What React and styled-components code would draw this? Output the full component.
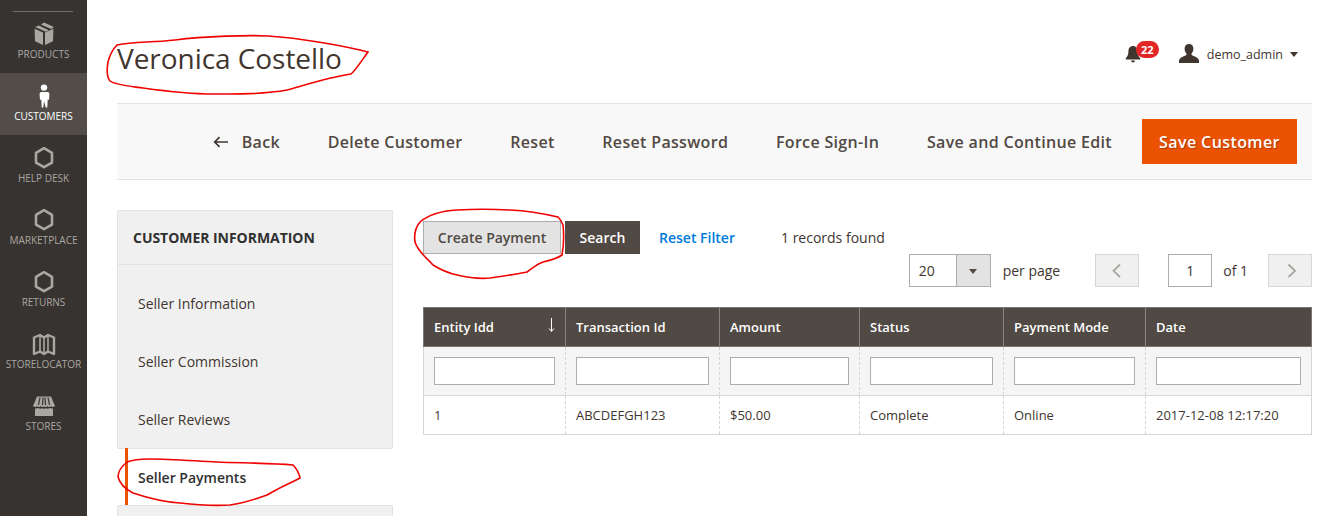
import React from "react";
import styled, { createGlobalStyle } from "styled-components";

const Global = createGlobalStyle`
  html, body { margin: 0; padding: 0; background: #fff; }
  body { font-family: "Open Sans", sans-serif; color: #41362f; overflow: hidden; }
  * { box-sizing: border-box; }
`;

const Page = styled.div`
  position: relative;
  display: flex;
  width: 1338px;
  height: 516px;
  overflow: hidden;
`;

const Rail = styled.nav`
  width: 87px;
  flex: none;
  background: #373330;
  padding-top: 11px;
`;
const RailRule = styled.div`
  width: 60px;
  height: 1px;
  margin: 0 auto -1px 13px;
  background: #736f6c;
`;
const RailItem = styled.a`
  display: flex;
  flex-direction: column;
  align-items: center;
  height: 62px;
  padding-top: 11px;
  background: ${(p) => (p.$active ? "#524d49" : "transparent")};
  color: ${(p) => (p.$active ? "#fff" : "#aaa6a0")};
  font-size: 10px;
  line-height: 14px;
  white-space: nowrap;
  svg { display: block; height: 24px; width: 24px; margin-bottom: 1px; color: ${(p) => (p.$active ? "#fff" : "#aaa6a0")}; }
`;

const Main = styled.main`
  flex: 1;
  min-width: 0;
  padding: 0 26px 0 30px;
`;
const TopRow = styled.header`
  display: flex;
  align-items: center;
  justify-content: space-between;
  height: 103px;
  padding: 14px 14px 0 0;
`;
const Title = styled.h1`
  margin: 0 0 2px;
  font-size: 28px;
  font-weight: 400;
  line-height: 36px;
  letter-spacing: -0.05px;
  color: #41362f;
`;
const Account = styled.div`
  display: flex;
  align-items: center;
  margin-bottom: 9px;
  font-size: 12.5px;
  color: #41362f;
`;
const Bell = styled.div`
  position: relative;
  width: 16px;
  height: 18px;
  margin-right: 38px;
  svg { display: block; width: 16px; height: 18px; }
`;
const Badge = styled.span`
  position: absolute;
  left: 11px;
  top: -4px;
  width: 23px;
  height: 17px;
  border-radius: 9px;
  background: #e22626;
  color: #fff;
  font-size: 11px;
  font-weight: 700;
  line-height: 17px;
  text-align: center;
`;
const UserIcon = styled.svg`
  width: 20px;
  height: 20px;
  margin-right: 8px;
`;
const Caret = styled.span`
  width: 0;
  height: 0;
  margin-left: 7px;
  border-left: 4px solid transparent;
  border-right: 4px solid transparent;
  border-top: 5px solid #41362f;
`;

const Toolbar = styled.div`
  display: flex;
  align-items: center;
  justify-content: flex-end;
  height: 77px;
  padding-right: 15px;
  background: #f8f8f8;
  border-top: 1px solid #e3e3e3;
  border-bottom: 1px solid #e3e3e3;
`;
const ToolButton = styled.a`
  display: flex;
  align-items: center;
  margin-right: 47.7px;
  font-size: 16px;
  font-weight: 600;
  letter-spacing: 0.33px;
  color: #514943;
  white-space: nowrap;
  &:nth-last-child(2) { margin-right: 30px; }
  svg { width: 16px; height: 12px; margin-right: 13px; }
`;
const SaveButton = styled.button`
  width: 155px;
  height: 45px;
  border: 0;
  background: #eb5202;
  color: #fff;
  font-family: inherit;
  font-size: 16px;
  font-weight: 600;
  letter-spacing: 0.4px;
  text-shadow: 1px 1px 1px rgba(0, 0, 0, 0.3);
`;

const Columns = styled.div`
  display: flex;
  padding-top: 30px;
`;
const Side = styled.aside`
  width: 276px;
  flex: none;
`;
const SidePanel = styled.div`
  background: #f0f0f0;
  border: 1px solid #e3e3e3;
  border-radius: 1px;
`;
const SideHead = styled.div`
  height: 54px;
  margin-bottom: 9px;
  padding-left: 15px;
  border-bottom: 1px solid #e3e3e3;
  font-size: 14px;
  font-weight: 700;
  line-height: 54px;
  letter-spacing: -0.04px;
  color: #303030;
`;
const SideItem = styled.div`
  height: 58px;
  padding-left: 20px;
  font-size: 14px;
  line-height: 60px;
  color: #41362f;
`;
const ActiveItem = styled.div`
  height: 58px;
  margin: -1px 0 -1px 8px;
  padding-left: 10px;
  border-left: 3px solid #eb5202;
  font-size: 14px;
  font-weight: 600;
  line-height: 60px;
  color: #303030;
`;
const NextPanel = styled(SidePanel)`
  height: 30px;
`;

const Content = styled.section`
  width: 889px;
  margin-left: 30px;
  padding-top: 11px;
`;
const ActionRow = styled.div`
  display: flex;
  align-items: center;
  height: 33px;
  font-size: 14px;
`;
const CreateButton = styled.button`
  width: 138px;
  height: 33px;
  padding: 0;
  border: 1px solid #adadad;
  background: #e3e3e3;
  color: #514943;
  font-family: inherit;
  font-size: 14px;
  font-weight: 600;
`;
const SearchButton = styled.button`
  width: 75px;
  height: 33px;
  margin-left: 4px;
  padding: 0;
  border: 0;
  background: #514943;
  color: #fff;
  font-family: inherit;
  font-size: 14px;
  font-weight: 600;
`;
const ResetLink = styled.a`
  margin-left: 19px;
  color: #007bdb;
  font-weight: 600;
`;
const Records = styled.span`
  margin-left: 46px;
  color: #41362f;
`;
const PagerRow = styled.div`
  display: flex;
  align-items: center;
  justify-content: flex-end;
  height: 33px;
  font-size: 14px;
  color: #41362f;
`;
const PageSize = styled.div`
  display: flex;
  width: 82px;
  height: 33px;
  border: 1px solid #adadad;
  line-height: 31px;
`;
const PageSizeValue = styled.span`
  flex: 1;
  padding-left: 9px;
  background: #fff;
`;
const PageSizeArrow = styled.span`
  display: flex;
  align-items: center;
  justify-content: center;
  width: 34px;
  background: #e3e3e3;
  border-left: 1px solid #adadad;
  &::after {
    content: "";
    margin-top: 2px;
    border-left: 4px solid transparent;
    border-right: 4px solid transparent;
    border-top: 5px solid #514943;
  }
`;
const PerPage = styled.span`
  margin: 0 35px 0 12px;
`;
const PageArrow = styled.span`
  display: flex;
  align-items: center;
  justify-content: center;
  width: 44px;
  height: 33px;
  border: 1px solid #d6d6d6;
  background: #f0f0f0;
  svg { width: 11px; height: 16px; overflow: visible; }
`;
const PageInput = styled.span`
  width: 44px;
  height: 33px;
  margin-left: 29px;
  border: 1px solid #adadad;
  background: #fff;
  line-height: 31px;
  text-align: center;
`;
const OfPages = styled.span`
  margin: 0 20px 0 11px;
`;

const Grid = styled.table`
  width: 888px;
  margin-top: 20px;
  border-collapse: collapse;
  table-layout: fixed;
  font-size: 13px;
  color: #41362f;
`;
const Th = styled.th`
  position: relative;
  height: 39px;
  padding: 0 10px;
  background: #514943;
  border: 1px solid #8a837f;
  border-top-color: #7c746f;
  border-bottom-color: #7c746f;
  &:first-child { border-left-color: #7c746f; }
  &:last-child { border-right-color: #7c746f; }
  color: #fff;
  font-weight: 600;
  text-align: left;
`;
const SortArrow = styled.svg`
  position: absolute;
  right: 10px;
  top: 10px;
  width: 7px;
  height: 14px;
`;
const FilterCell = styled.td`
  height: 49px;
  padding: 0 10px;
  background: #f5f5f5;
  border-left: 1px dashed #d6d6d6;
  border-right: 1px dashed #d6d6d6;
  border-bottom: 1px solid #d6d6d6;
  &:first-child { border-left: 1px solid #d6d6d6; }
  &:last-child { border-right: 1px solid #d6d6d6; }
`;
const FilterInput = styled.div`
  height: 28px;
  background: #fff;
  border: 1px solid #adadad;
`;
const Td = styled.td`
  height: 39px;
  padding: 0 10px;
  background: #fff;
  border-left: 1px dashed #d6d6d6;
  border-right: 1px dashed #d6d6d6;
  border-bottom: 1px solid #d6d6d6;
  &:first-child { border-left: 1px solid #d6d6d6; }
  &:last-child { border-right: 1px solid #d6d6d6; }
`;

const Ink = styled.svg`
  position: absolute;
  left: 0;
  top: 0;
  width: 1338px;
  height: 516px;
  pointer-events: none;
  fill: none;
  stroke: #f00000;
  stroke-width: 1.6;
`;

const Hexagon = () => (
  <svg viewBox="0 0 24 24" fill="none" stroke="currentColor" strokeWidth="2.6">
    <path d="M12 2.2 20 6.8 20 16.6 12 21.2 4 16.6 4 6.8Z" strokeLinejoin="round" />
  </svg>
);
const BoxIcon = () => (
  <svg viewBox="0 0 24 24" fill="currentColor">
    <path d="M12 .5 22 5 19 7 9 2.5Z" />
    <path d="M6.8 3.6 16.8 8.2 14 9.8 3 5Z" />
    <path d="M2.6 6.7 11 10.6V23L3 19.2Z" />
    <path d="M13 10.6 21.4 6.7 21 19.2 13 23Z" />
  </svg>
);
const PersonIcon = () => (
  <svg viewBox="0 0 24 24" fill="currentColor">
    <circle cx="12" cy="3.6" r="3.2" />
    <path d="M8.6 8h6.8c1.3 0 2 .8 2 2l-.3 5.2c-.1.8-1.2.8-1.4.1l-.4 8.2h-1.6L12 17l-.7 6.5H9.7l-.4-8.2c-.2.7-1.3.7-1.4-.1L7.6 10c0-1.2.7-2 2-2Z" />
  </svg>
);
const MapIcon = () => (
  <svg viewBox="0 0 24 24" fill="none" stroke="currentColor" strokeWidth="2.4" strokeLinejoin="round">
    <path d="M2 5.5 8 3l4 2.5L16 3l6 2.5V22l-6-2.5-4 2.5-4-2.5L2 22Z" />
    <path d="M8 3v16.5M16 3v16.5M12 5.5V22" strokeWidth="1.6" />
  </svg>
);
const StoreIcon = () => (
  <svg viewBox="0 0 24 24" fill="currentColor">
    <path d="M5 2.5h14l4 9.5c-1.6 1.2-3 1.2-4 .2-1.2 1-2.6 1-3.7 0-1 1-2.3 1-3.3.3-1 .7-2.3.7-3.3-.3-1.1 1-2.5 1-3.7 0-1 1-2.4 1-4-.2Z" />
    <path d="M3 14.3c1 .3 2 .2 3-.2 1.8.9 3.1.8 4 .2 1.2.6 2.8.6 4 0 .9.6 2.2.7 4-.2 1 .4 2 .5 3 .2V22H3Z" />
    <path d="M8 3.5 6.5 11M11 3.5 10.5 11M13 3.5 13.5 11M16 3.5 17.5 11" stroke="#373330" strokeWidth="1.2" fill="none" />
  </svg>
);

const rail = [
  ["PRODUCTS", <BoxIcon />],
  ["CUSTOMERS", <PersonIcon />, true],
  ["HELP DESK", <Hexagon />],
  ["MARKETPLACE", <Hexagon />],
  ["RETURNS", <Hexagon />],
  ["STORELOCATOR", <MapIcon />],
  ["STORES", <StoreIcon />],
];
const tools = ["Delete Customer", "Reset", "Reset Password", "Force Sign-In", "Save and Continue Edit"];
const sideItems = ["Seller Information", "Seller Commission", "Seller Reviews"];
const cols = [
  ["Entity Idd", 142, "1"],
  ["Transaction Id", 154, "ABCDEFGH123"],
  ["Amount", 140, "$50.00"],
  ["Status", 144, "Complete"],
  ["Payment Mode", 142, "Online"],
  ["Date", 166, "2017-12-08 12:17:20"],
];

export default function App() {
  return (
    <Page>
      <Global />
      <Rail>
        <RailRule />
        {rail.map(([label, icon, active]) => (
          <RailItem key={label} $active={active}>
            {icon}
            {label}
          </RailItem>
        ))}
      </Rail>
      <Main>
        <TopRow>
          <Title>Veronica Costello</Title>
          <Account>
            <Bell>
              <svg viewBox="0 0 16 18" fill="#41362f">
                <path d="M8 1c3 0 4.6 2.4 4.6 5.4 0 3.6 1 5 2.6 6.6v1.4H.8V13c1.6-1.6 2.6-3 2.6-6.6C3.4 3.4 5 1 8 1Z" />
                <path d="M6 15.4h4a2 2 0 0 1-4 0Z" />
              </svg>
              <Badge>22</Badge>
            </Bell>
            <UserIcon viewBox="0 0 20 20" fill="#41362f">
              <path d="M10 0c2.8 0 4.4 2 4.4 4.8 0 2-.8 3.8-2 5 0 1 .5 1.5 2.2 2.2 2.6 1 4.6 2 5.4 4.2V19H0v-2.8c.8-2.2 2.8-3.2 5.4-4.2 1.7-.7 2.2-1.2 2.2-2.2-1.2-1.2-2-3-2-5C5.6 2 7.2 0 10 0Z" />
            </UserIcon>
            demo_admin
            <Caret />
          </Account>
        </TopRow>
        <Toolbar>
          <ToolButton>
            <svg viewBox="0 0 16 12" fill="none" stroke="#41362f" strokeWidth="1.7">
              <path d="M15 6H2M6.5 1.2 1.7 6l4.8 4.8" />
            </svg>
            Back
          </ToolButton>
          {tools.map((t) => (
            <ToolButton key={t}>{t}</ToolButton>
          ))}
          <SaveButton>Save Customer</SaveButton>
        </Toolbar>
        <Columns>
          <Side>
            <SidePanel>
              <SideHead>CUSTOMER INFORMATION</SideHead>
              {sideItems.map((s) => (
                <SideItem key={s}>{s}</SideItem>
              ))}
            </SidePanel>
            <ActiveItem>Seller Payments</ActiveItem>
            <NextPanel />
          </Side>
          <Content>
            <ActionRow>
              <CreateButton>Create Payment</CreateButton>
              <SearchButton>Search</SearchButton>
              <ResetLink>Reset Filter</ResetLink>
              <Records>1 records found</Records>
            </ActionRow>
            <PagerRow>
              <PageSize>
                <PageSizeValue>20</PageSizeValue>
                <PageSizeArrow />
              </PageSize>
              <PerPage>per page</PerPage>
              <PageArrow>
                <svg viewBox="0 0 11 16" fill="none" stroke="#a9a5a1" strokeWidth="1.8">
                  <path d="M8 1.5 1.5 7.8 8 14" />
                </svg>
              </PageArrow>
              <PageInput>1</PageInput>
              <OfPages>of 1</OfPages>
              <PageArrow>
                <svg viewBox="0 0 11 16" fill="none" stroke="#a9a5a1" strokeWidth="1.8">
                  <path d="M3.5 1.5 10 7.8 3.5 14" />
                </svg>
              </PageArrow>
            </PagerRow>
            <Grid>
              <colgroup>
                {cols.map(([name, width]) => (
                  <col key={name} width={width} />
                ))}
              </colgroup>
              <thead>
                <tr>
                  {cols.map(([name], i) => (
                    <Th key={name}>
                      {name}
                      {i === 0 && (
                        <SortArrow viewBox="0 0 7 14" fill="none" stroke="#fff" strokeWidth="1">
                          <path d="M3.5 0v13M1 10.5 3.5 13.5 6 10.5" />
                        </SortArrow>
                      )}
                    </Th>
                  ))}
                </tr>
              </thead>
              <tbody>
                <tr>
                  {cols.map(([name]) => (
                    <FilterCell key={name}>
                      <FilterInput />
                    </FilterCell>
                  ))}
                </tr>
                <tr>
                  {cols.map(([name, , value]) => (
                    <Td key={name}>{value}</Td>
                  ))}
                </tr>
              </tbody>
            </Grid>
          </Content>
        </Columns>
      </Main>
      <Ink viewBox="0 0 1338 516">
        <path d="M117 45C135 41 150 43 175 40C205 36 250 35 268 36C300 38 345 46 368 52C362 60 356 70 351 74C330 77 305 85 287 90C260 95 235 94 213 94C190 94 165 91 143 88C128 86 115 85 110 81C106 76 107 68 108 62C110 54 113 49 117 45Z" />
        <path d="M558 217C545 214 530 211 510 210C490 209 475 209 457 210C440 211 428 215 420 222C415 228 414 235 415 242C418 252 427 258 433 265C441 270 448 273 457 275C470 278 480 279 490 278C505 276 517 274 527 272C533 268 537 264 543 262C552 260 558 258 562 255C564 245 564 235 563 225C562 222 560 219 558 217Z" />
        <path d="M127 462C122 466 118 471 118 477C120 484 127 490 133 493C148 498 163 502 180 503C197 505 215 506 230 505C245 503 256 499 267 495C276 490 283 486 290 483C295 481 298 479 300 478C299 473 296 468 293 465C270 463 240 463 217 462C195 461 170 459 150 459C140 459 132 460 127 462Z" />
      </Ink>
    </Page>
  );
}
